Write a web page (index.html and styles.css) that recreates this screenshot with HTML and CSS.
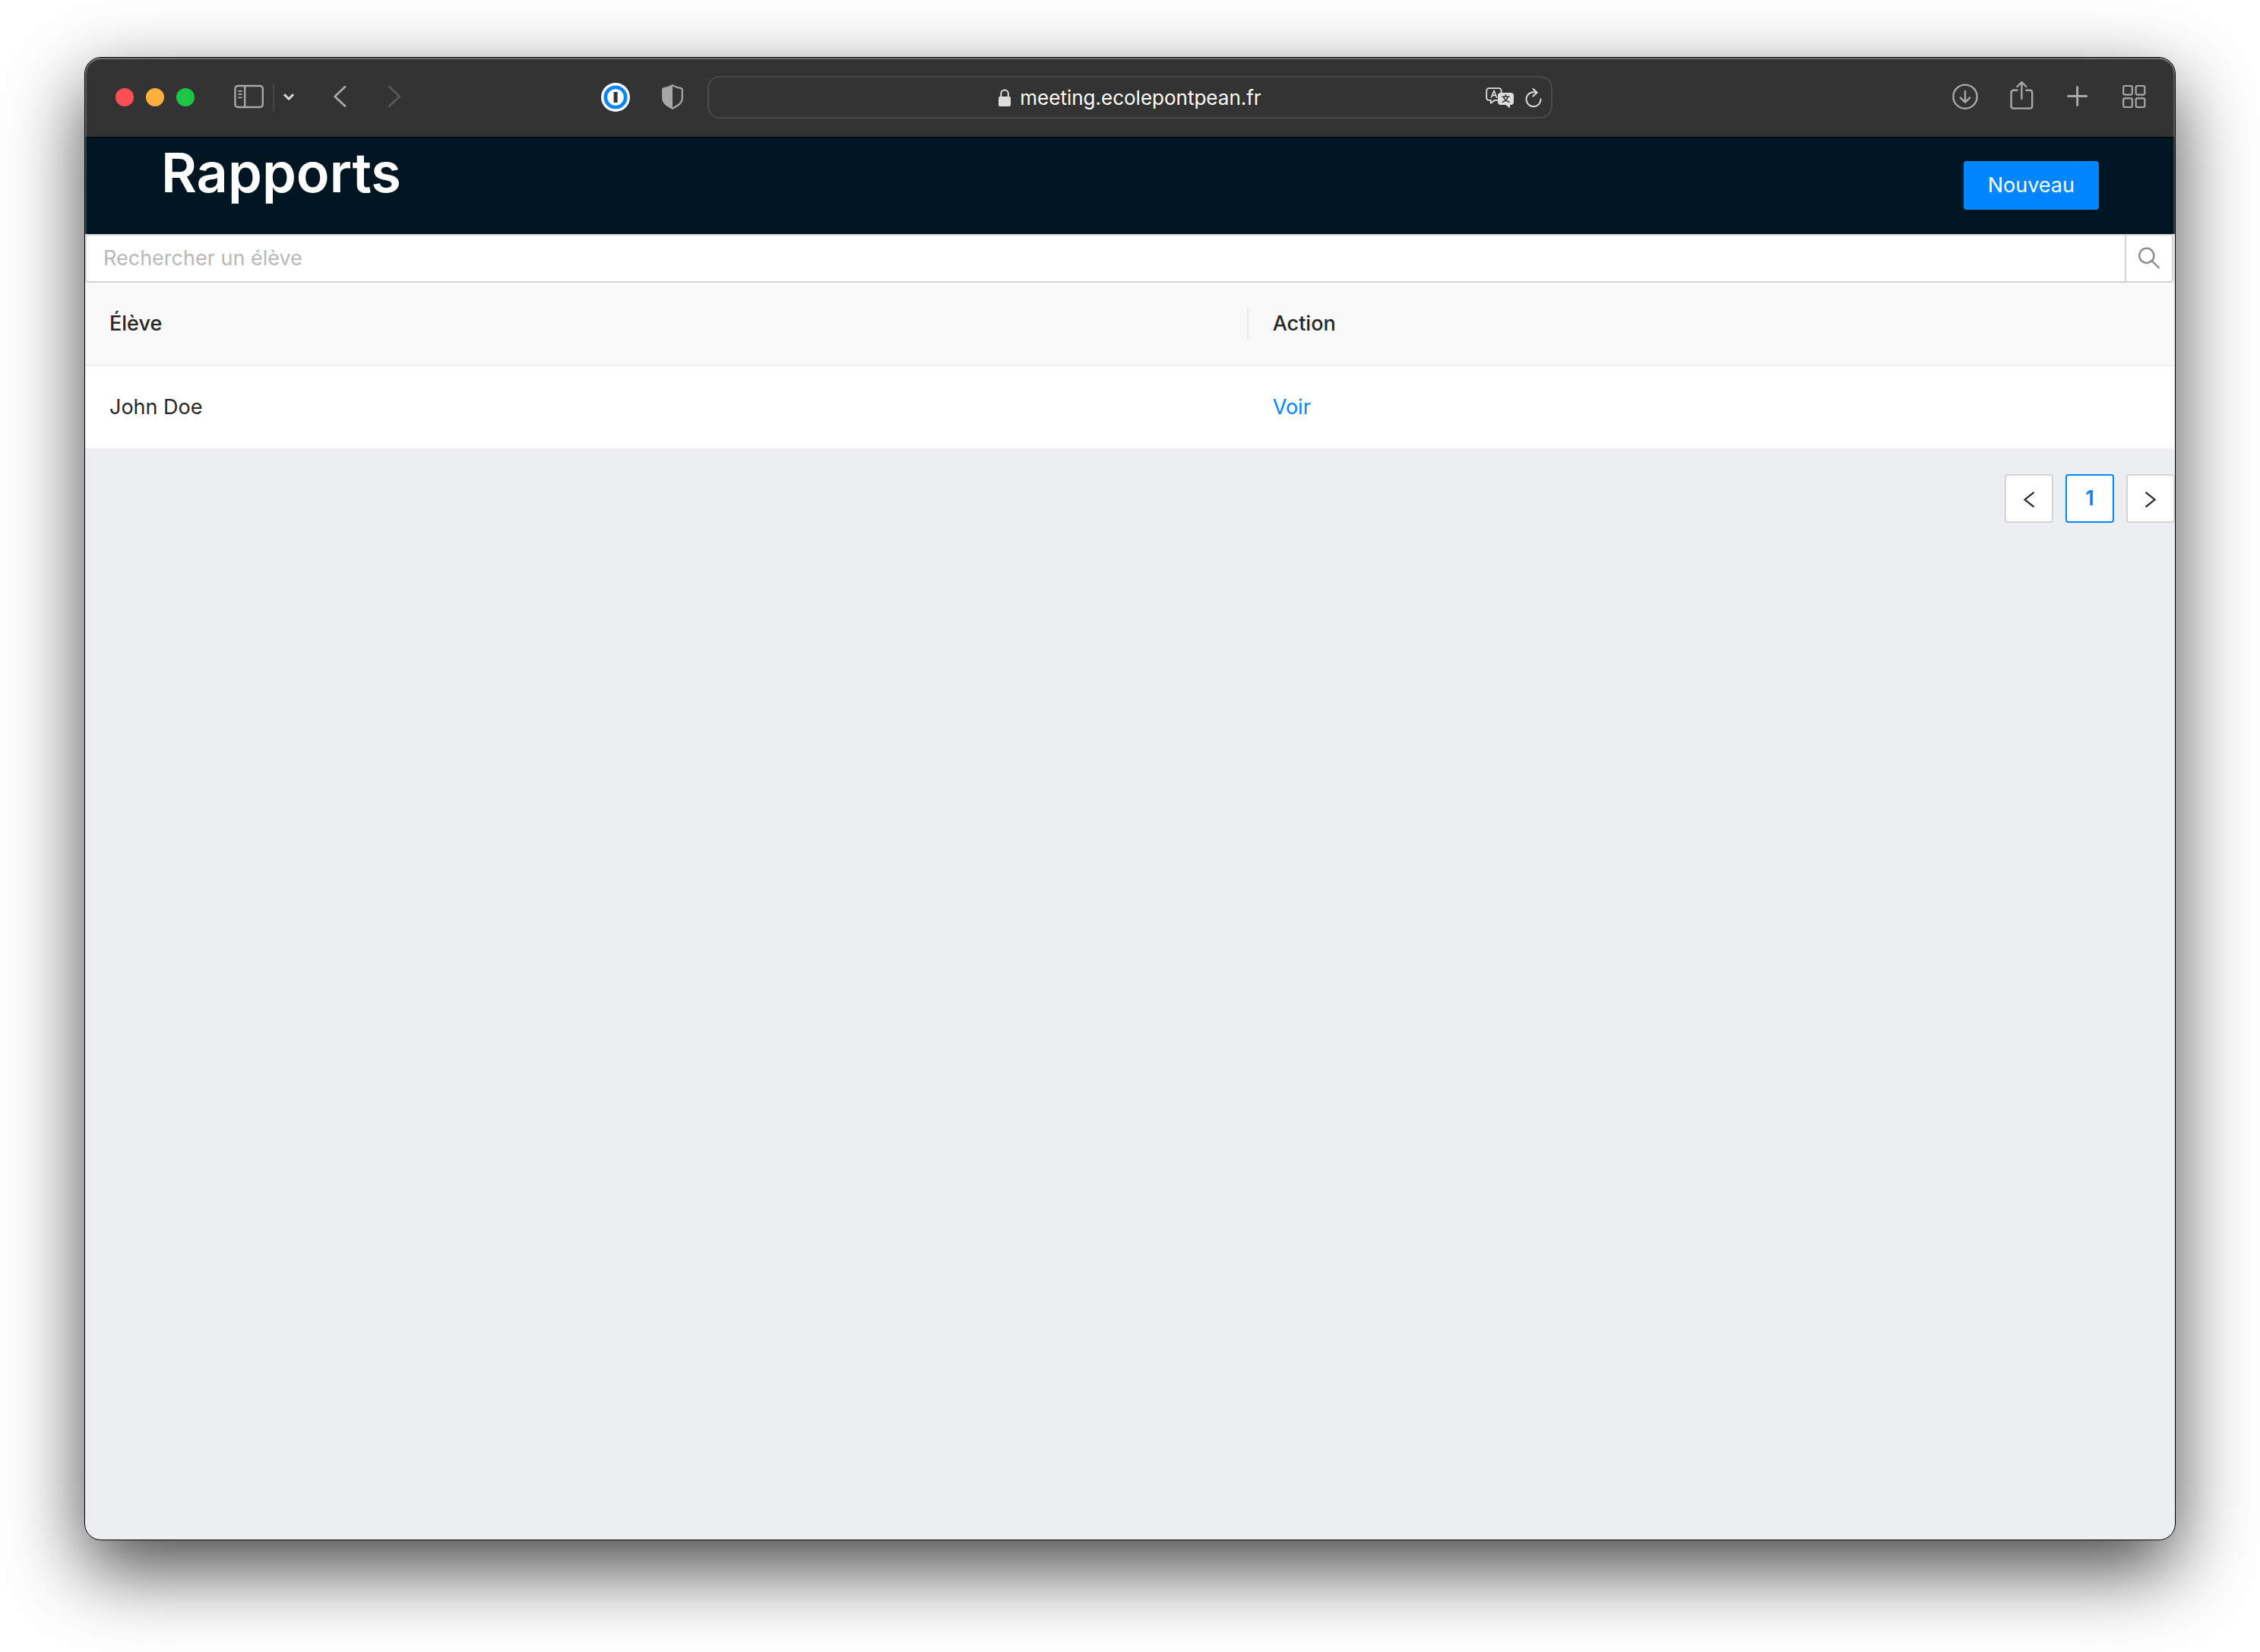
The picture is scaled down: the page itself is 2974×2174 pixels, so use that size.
FILE: index.html
```html
<!DOCTYPE html>
<html lang="fr">
<head>
<meta charset="utf-8">
<title>Rapports</title>
<link rel="stylesheet" href="styles.css">
</head>
<body>
<div class="window">
  <div class="toolbar">
    <div class="toolbar-left">
      <div class="lights">
        <button class="light light-close" aria-label="Fermer"></button>
        <button class="light light-min" aria-label="Réduire"></button>
        <button class="light light-max" aria-label="Agrandir"></button>
      </div>
      <div class="sidebar-tools">
        <button class="tool" aria-label="Barre latérale">
          <svg width="40" height="44" viewBox="0 0 40 44" fill="none" stroke="#a8a8a8" stroke-width="2.4" stroke-linecap="round"><rect x="1.4" y="7" width="36.4" height="28" rx="3.6"/><path d="M14.2 7v28"/><path d="M6 14h4M6 18.2h4M6 22.4h4" stroke-width="1.8"/></svg>
        </button>
        <span class="divider"></span>
        <button class="tool" aria-label="Groupes d’onglets">
          <svg width="16" height="44" viewBox="0 0 16 44" fill="none" stroke="#dadada" stroke-width="3" stroke-linecap="round" stroke-linejoin="round"><path d="M2.8 19L8 24.2L13.2 19"/></svg>
        </button>
      </div>
      <div class="history">
        <button class="tool" aria-label="Précédent">
          <svg width="20" height="44" viewBox="0 0 20 44" fill="none" stroke="#a8a8a8" stroke-width="2.8" stroke-linecap="round" stroke-linejoin="round"><path d="M17 8.2L3.6 21L17 33.6"/></svg>
        </button>
        <button class="tool" aria-label="Suivant">
          <svg width="20" height="44" viewBox="0 0 20 44" fill="none" stroke="#585858" stroke-width="2.8" stroke-linecap="round" stroke-linejoin="round"><path d="M3.4 8.2L16.8 21L3.4 33.6"/></svg>
        </button>
      </div>
      <div class="extensions">
        <button class="tool" aria-label="1Password">
          <svg width="38" height="44" viewBox="0 0 38 44"><circle cx="19" cy="22" r="19" fill="#fff"/><circle cx="19" cy="22" r="13.2" fill="#fff" stroke="#0a84ff" stroke-width="4.8"/><rect x="16.6" y="15" width="5" height="14" fill="#333"/></svg>
        </button>
        <button class="tool" aria-label="Rapport de confidentialité">
          <svg width="28" height="44" viewBox="0 0 28 44"><path d="M14 6.2C17 8.2 21.500 9.600 25.400 10.200Q26.800 10.500 26.800 12V23C26.800 30 20.500 33.200 14 36.800C7.500 33.200 1.200 30 1.200 23V12Q1.200 10.500 2.600 10.200C6.500 9.600 11 8.200 14 6.200Z" fill="none" stroke="#a8a8a8" stroke-width="2.2"/><path d="M14 6V37C7.500 33.500 1 30 1 23V12Q1 10.500 2.600 10.200C6.500 9.600 11 8.200 14 6Z" fill="#a8a8a8"/></svg>
        </button>
      </div>
    </div>
    <div class="address">
      <label class="address-main">
        <svg width="16" height="24" viewBox="0 0 16 24"><path d="M3.200 11V6.500C3.200 -0.300 12.800 -0.300 12.800 6.500V11" fill="none" stroke="#dedede" stroke-width="2"/><rect x="0" y="10" width="16" height="13" rx="2" fill="#dedede"/></svg>
        <input class="address-input" type="text" value="meeting.ecolepontpean.fr" aria-label="Adresse">
      </label>
      <div class="address-tools">
        <button class="tool" aria-label="Traduire">
          <svg width="38" height="28" viewBox="0 0 38 28" fill="none" stroke="#dedede" stroke-width="1.800" stroke-linecap="round" stroke-linejoin="round"><path d="M15.500 16.800H12L6.800 20.800V16.800H4.800Q1.200 16.800 1.200 13.200V4.800Q1.200 1.200 4.800 1.200H17Q20.600 1.200 20.600 4.800V6.500"/><path d="M7.500 13.200L11 4.200L14.500 13.200M8.700 10.400H13.300" stroke-width="1.700"/><path d="M20 7H33Q37 7 37 11V19Q37 23 33 23H32V27.500L26.500 23H20Q16 23 16 19V11Q16 7 20 7Z" fill="#dedede" stroke="none"/><path d="M26.400 9.800V12M22 12.200H31M29.300 12.400C28.400 16 25.500 18.400 22.200 19.200M23.600 12.400C24.600 16 27.500 18.400 30.800 19.200" stroke="#333" stroke-width="1.600"/></svg>
        </button>
        <button class="tool" aria-label="Actualiser">
          <svg width="22" height="28" viewBox="0 0 22 28" fill="none" stroke="#dedede" stroke-width="2" stroke-linecap="round" stroke-linejoin="round"><path d="M14.600 6.600C12 5.900 9.500 6 7.200 7A9.500 9.500 0 1 0 20.500 15.600"/><path d="M10.400 2L15.600 6.800L10.400 11.600"/></svg>
        </button>
      </div>
    </div>
    <div class="toolbar-right">
      <button class="tool" aria-label="Téléchargements">
        <svg width="36" height="44" viewBox="0 0 36 44" fill="none" stroke="#a8a8a8" stroke-width="2.400" stroke-linecap="round" stroke-linejoin="round"><circle cx="18" cy="21.200" r="15.600"/><path d="M18 14V28M11.800 22.600L18 28.600L24.200 22.600"/></svg>
      </button>
      <button class="tool" aria-label="Partager">
        <svg width="36" height="44" viewBox="0 0 36 44" fill="none" stroke="#a8a8a8" stroke-width="2.400" stroke-linecap="round" stroke-linejoin="round"><path d="M13.400 12.800H7.800Q4.600 12.800 4.600 16V33.400Q4.600 36.600 7.800 36.600H29Q32.200 36.600 32.200 33.400V16Q32.200 12.800 29 12.800H23.400" stroke-linecap="butt"/><path d="M18.400 24V2.600M12.400 8L18.400 2.200L24.400 8"/></svg>
      </button>
      <button class="tool" aria-label="Nouvel onglet">
        <svg width="36" height="44" viewBox="0 0 36 44" fill="none" stroke="#a8a8a8" stroke-width="3" stroke-linecap="round"><path d="M17.600 8.400V32.600M5.500 20.500H29.700"/></svg>
      </button>
      <button class="tool" aria-label="Vue d’ensemble des onglets">
        <svg width="36" height="44" viewBox="0 0 36 44" fill="none" stroke="#a8a8a8" stroke-width="2.200"><rect x="4.200" y="7" width="11.600" height="11.600" rx="2"/><rect x="20.700" y="7" width="11.600" height="11.600" rx="2"/><rect x="4.200" y="23.400" width="11.600" height="11.600" rx="2"/><rect x="20.700" y="23.400" width="11.600" height="11.600" rx="2"/></svg>
      </button>
    </div>
  </div>

  <header class="page-header">
    <h1 class="page-title">Rapports</h1>
    <button class="btn-primary">Nouveau</button>
  </header>

  <main>
    <form class="search" role="search">
      <input class="search-input" type="text" placeholder="Rechercher un élève" aria-label="Rechercher un élève">
      <button class="search-button" type="button" aria-label="Rechercher">
        <svg width="30" height="30" viewBox="0 0 30 30" fill="none" stroke="#8c8c8c" stroke-width="2.400"><circle cx="11.800" cy="11.400" r="9.600"/><path d="M18.500 18L28.500 28"/></svg>
      </button>
    </form>

    <table class="table">
      <colgroup><col class="col-student"><col></colgroup>
      <thead>
        <tr><th scope="col"><span class="th-label">Élève</span></th><th scope="col">Action</th></tr>
      </thead>
      <tbody>
        <tr><td>John Doe</td><td><a class="link" href="#">Voir</a></td></tr>
      </tbody>
    </table>

    <nav class="pagination" aria-label="Pagination">
      <button class="page" aria-label="Page précédente"><svg width="16" height="24" viewBox="0 0 16 24" fill="none" stroke="#262626" stroke-width="2.200"><path d="M14.500 3.800L2.500 13.500L14.500 23.200"/></svg></button>
      <button class="page page-current" aria-current="page">1</button>
      <button class="page" aria-label="Page suivante"><svg width="16" height="24" viewBox="0 0 16 24" fill="none" stroke="#262626" stroke-width="2.200"><path d="M1.500 3.800L13.500 13.500L1.500 23.200"/></svg></button>
    </nav>
  </main>
</div>
</body>
</html>
```

FILE: styles.css
```css
* {
  box-sizing: border-box;
}

body {
  margin: 0;
  min-height: 100vh;
  padding: 75px 111px 147px;
  display: flex;
  background: #fff;
  color: #262626;
  font: 27px/44px Inter, "Liberation Sans", sans-serif;
}

button,
input {
  margin: 0;
  padding: 0;
  border: 0;
  font: inherit;
  color: inherit;
  background: none;
}

svg {
  display: block;
}

/* Browser window */
.window {
  position: relative;
  flex: 1;
  min-width: 0;
  border: 1px solid #000;
  border-radius: 22px;
  background: #ebeff2;
  overflow: hidden;
  box-shadow: 0 38px 100px rgba(0, 0, 0, 0.72);
}

/* Light rim drawn over the window's edge */
.window::after {
  content: "";
  position: absolute;
  inset: 0;
  border: 2px solid rgba(255, 255, 255, 0.2);
  border-top-color: rgba(255, 255, 255, 0.3);
  border-radius: 21px;
  pointer-events: none;
}

.toolbar {
  display: grid;
  grid-template-columns: 1fr minmax(0, 1112px) 1fr;
  align-items: center;
  height: 105px;
  border-bottom: 1px solid #000;
  background: #333;
}

.toolbar-left {
  display: flex;
  align-items: center;
  padding: 0 32px 0 40px;
}

.lights {
  display: flex;
  gap: 16px;
}

.light {
  width: 24px;
  height: 24px;
  border-radius: 50%;
}

.light-close { background: #ff4f52; }
.light-min { background: #ffb03c; }
.light-max { background: #1fc546; }

.sidebar-tools {
  display: flex;
  align-items: center;
  gap: 11px;
  margin-left: 52px;
}

.divider {
  width: 2px;
  height: 36px;
  background: #474747;
}

.history {
  display: flex;
  gap: 52px;
  margin-left: 49px;
}

.extensions {
  display: flex;
  gap: 42px;
  margin-left: auto;
}

.address {
  display: grid;
  grid-template-columns: 1fr auto 1fr;
  align-items: center;
  height: 56px;
  padding: 2px 12px 0;
  border: 2px solid #4b4b4b;
  border-radius: 16px;
  color: #fff;
}

.address-main {
  grid-column: 2;
  display: flex;
  align-items: center;
  gap: 12px;
}

.address-input {
  field-sizing: content;
  font-size: 26px;
  line-height: 32px;
}

.address-tools {
  display: flex;
  justify-content: flex-end;
  gap: 14px;
}

.toolbar-right {
  display: flex;
  justify-content: flex-end;
  gap: 38px;
  padding-right: 36px;
}

/* Page */
.page-header {
  display: flex;
  justify-content: space-between;
  align-items: flex-start;
  height: 127px;
  padding: 0 100px;
  background: #001522;
}

.page-title {
  margin: 0;
  color: #fff;
  font-size: 72px;
  font-weight: 600;
  line-height: 92px;
}

.btn-primary {
  height: 64px;
  margin-top: 31px;
  padding: 0 32px;
  border-radius: 4px;
  background: #0087ff;
  color: #fff;
}

.search {
  display: flex;
  height: 64px;
  padding-right: 2px;
}

.search-input {
  flex: 1;
  min-width: 0;
  padding: 0 22px;
  border: 2px solid #d4d4d4;
  border-radius: 4px 0 0 4px;
  background: #fff;
}

.search-input::placeholder {
  color: #b8b8b8;
  opacity: 1;
}

.search-button {
  display: grid;
  place-items: center;
  width: 64px;
  margin-left: -2px;
  border: 2px solid #d4d4d4;
  border-radius: 0 4px 4px 0;
  background: #fff;
}

.table {
  width: 100%;
  border-collapse: separate;
  border-spacing: 0;
  table-layout: fixed;
}

.col-student {
  width: 55.66%;
}

.table th,
.table td {
  padding: 32px;
  text-align: left;
}

.table th {
  border-bottom: 2px solid #ededed;
  background: #f9f9f9;
  font-weight: 500;
}

.table th:first-child {
  padding-right: 0;
}

.th-label {
  display: block;
  border-right: 2px solid #ebebeb;
}

.table td {
  background: #fff;
}

.link {
  color: #0087ff;
  text-decoration: none;
}

.pagination {
  display: flex;
  justify-content: flex-end;
  gap: 16px;
  padding-top: 34px;
}

.page {
  display: grid;
  place-items: center;
  width: 64px;
  height: 64px;
  border: 2px solid #d4d4d4;
  border-radius: 4px;
  background: #fff;
}

.page-current {
  border-color: #0087ff;
  color: #0087ff;
  font-weight: 600;
}
```
